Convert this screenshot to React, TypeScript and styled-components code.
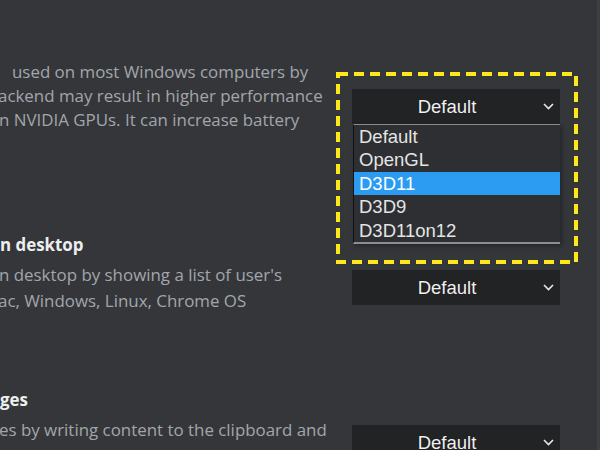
import styled, { createGlobalStyle } from "styled-components"
import React from "react"

const GlobalStyle = createGlobalStyle`
  html, body {
    margin: 0;
    padding: 0;
    background: #35363a;
  }
`

const OPTIONS = ["Default", "OpenGL", "D3D11", "D3D9", "D3D11on12"]

type FlagRowType = {
  title?: string
  lines: { text: string; shift?: number }[]
  height: number
  top: number
  offset: number
  lineHeight: number
  open?: boolean
}

function Chevron() {
  return (
    <svg width="11" height="7" viewBox="0 0 11 7">
      <polyline
        points="1,1 5.5,5.5 10,1"
        fill="none"
        stroke="#e8e8e8"
        strokeWidth="1.6"
      />
    </svg>
  )
}

function Select({ open }: { open?: boolean }) {
  return (
    <SelectWrap>
      <SelectBox>
        <span className="value">Default</span>
        <span className="chevron">
          <Chevron />
        </span>
      </SelectBox>
      {open && (
        <>
          <OptionList>
            {OPTIONS.map((o) => (
              <OptionItem key={o} $active={o === "D3D11"}>
                {o}
              </OptionItem>
            ))}
          </OptionList>
          <Highlight>
            <svg width="242" height="192" viewBox="0 0 242 192">
              <rect
                x="2"
                y="2"
                width="238"
                height="188"
                fill="none"
                stroke="#fbe91a"
                strokeWidth="4"
                strokeDasharray="10 6"
              />
            </svg>
          </Highlight>
        </>
      )}
    </SelectWrap>
  )
}

function FlagRow({ title, lines, height, top, offset, lineHeight, open }: FlagRowType) {
  return (
    <Row $height={height} $top={top}>
      <TextCol>
        {title && <Title>{title}</Title>}
        {lines.map((l, i) => (
          <Desc key={i} $lh={lineHeight} $shift={l.shift ?? 0}>
            {l.text}
          </Desc>
        ))}
      </TextCol>
      <Control $offset={offset}>
        <Select open={open} />
      </Control>
    </Row>
  )
}

export default function App() {
  return (
    <Page>
      <GlobalStyle />
      <Content>
        <FlagRow
          height={233}
          top={60}
          offset={29}
          lineHeight={24}
          open
          lines={[
            { text: "used on most Windows computers by", shift: 12 },
            { text: "ackend may result in higher performance", shift: -2 },
            { text: "n NVIDIA GPUs. It can increase battery", shift: -1 },
          ]}
        />
        <FlagRow
          height={155}
          top={0}
          offset={37}
          lineHeight={26}
          title="n desktop"
          lines={[
            { text: "n desktop by showing a list of user's", shift: -1 },
            { text: "ac, Windows, Linux, Chrome OS", shift: -2 },
          ]}
        />
        <FlagRow
          height={62}
          top={0}
          offset={37}
          lineHeight={26}
          title="ges"
          lines={[
            { text: "es by writing content to the clipboard and", shift: -1 },
            { text: "ed to a web page.", shift: -1 },
          ]}
        />
      </Content>
      <Scrollbar />
    </Page>
  )
}

const Page = styled.div`
  display: flex;
  width: 600px;
  height: 450px;
  overflow: hidden;
  background: #35363a;
`

const Content = styled.div`
  flex: 1;
  display: flex;
  flex-direction: column;
`

const Scrollbar = styled.div`
  width: 3px;
  flex-shrink: 0;
  background: #3e3f43;
`

const Row = styled.div<{ $height: number; $top: number }>`
  display: flex;
  align-items: flex-start;
  flex-shrink: 0;
  box-sizing: border-box;
  height: ${({ $height }) => $height}px;
  padding-top: ${({ $top }) => $top}px;
`

const TextCol = styled.div`
  width: 340px;
  flex-shrink: 0;
  overflow: hidden;
  font-family: "Open Sans", "Noto Sans", sans-serif;
`

const Title = styled.div`
  font-size: 16.9px;
  font-weight: 700;
  color: #eceef0;
  line-height: 23px;
  margin-bottom: 6px;
  white-space: nowrap;
`

const Desc = styled.div<{ $lh: number; $shift: number }>`
  font-size: 16.9px;
  color: #a2a6ab;
  line-height: ${({ $lh }) => $lh}px;
  white-space: nowrap;
  margin-left: ${({ $shift }) => $shift}px;
`

const Control = styled.div<{ $offset: number }>`
  margin-left: 12px;
  margin-top: ${({ $offset }) => $offset}px;
  width: 208px;
`

const SelectWrap = styled.div`
  position: relative;
  width: 208px;
`

const SelectBox = styled.div`
  display: flex;
  align-items: center;
  height: 35px;
  background: #222325;
  font-family: "Liberation Sans", Arial, sans-serif;
  font-size: 18.5px;
  color: #f1f1f1;
  text-shadow: 0 0 1px rgba(0, 0, 0, 0.6);

  .value {
    flex: 1;
    text-align: center;
    padding-left: 6px;
  }
  .chevron {
    width: 24px;
    display: flex;
    justify-content: center;
  }
`

const OptionList = styled.div`
  position: absolute;
  top: 35px;
  left: 1px;
  right: 0;
  box-sizing: border-box;
  height: 120px;
  background: #2e2f32;
  border-top: 1px solid #8d8d8f;
  border-bottom: 2px solid #8d8d8f;
  border-left: 1px solid #111214;
  font-family: "Liberation Sans", Arial, sans-serif;
  font-size: 18.5px;
  box-shadow: 2px 2px 4px rgba(0, 0, 0, 0.3);
`

const OptionItem = styled.div<{ $active: boolean }>`
  height: 23.4px;
  line-height: 23px;
  padding-left: 5px;
  color: ${({ $active }) => ($active ? "#ffffff" : "#e4e4e4")};
  background: ${({ $active }) => ($active ? "#2b9cf2" : "transparent")};
`

const Highlight = styled.div`
  position: absolute;
  left: -16px;
  top: -17px;
  width: 242px;
  height: 192px;
  pointer-events: none;

  svg {
    display: block;
  }
`
